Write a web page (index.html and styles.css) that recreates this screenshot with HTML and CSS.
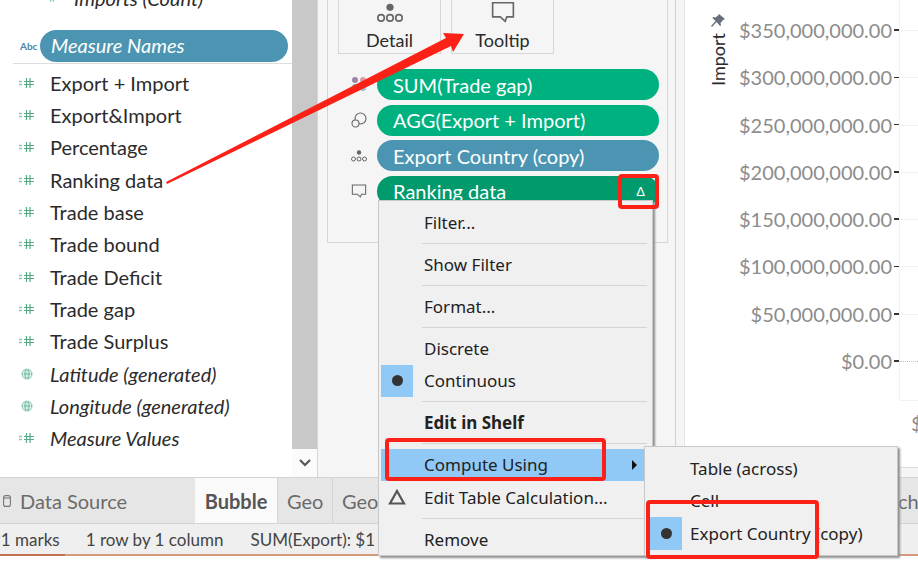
FILE: index.html
```html
<!DOCTYPE html>
<html lang="en">
<head>
    <meta charset="UTF-8">
    <meta name="viewport" content="width=device-width, initial-scale=1.0">
    <title>Ranking data</title>
    <link rel="stylesheet" href="styles.css">
</head>
<body>
    <svg class="defs" width="0" height="0">
        <symbol id="hash" viewBox="0 0 16 12">
            <path d="M0 4.5h3M0 7.5h3" stroke="#8cc7ae" stroke-width="1.6"/>
            <path d="M7.5 1v10M11 1v10M5 4.5h10M5 7.5h10" stroke="#55ab88" stroke-width="1.2" fill="none"/>
        </symbol>
        <symbol id="globe" viewBox="0 0 12 12">
            <circle cx="6" cy="6" r="5.5" fill="#7cc4a8"/>
            <path d="M0.5 4h11M0.5 8h11M6 0.5v11M3.5 1.2c-1.4 3-1.4 6.600 0 9.600M8.500 1.200c1.400 3 1.400 6.600 0 9.600" stroke="#fff" stroke-width="0.7" fill="none"/>
        </symbol>
        <symbol id="detail" viewBox="0 0 16 12">
            <circle cx="8" cy="2.500" r="2.200" fill="#666"/>
            <g fill="none" stroke="#666" stroke-width="1"><circle cx="2.500" cy="9" r="2"/><circle cx="8" cy="9" r="2"/><circle cx="13.500" cy="9" r="2"/></g>
        </symbol>
        <symbol id="bubble" viewBox="0 0 22 20">
            <path d="M1.500 1.500h19v13h-6l-1.500 4-4.500-4h-7z" fill="none" stroke="#666" stroke-width="1.500"/>
        </symbol>
    </svg>

    <div class="app">
        <div class="main">
            <div class="sidebar">
                <div class="fields">
                    <div class="field field-first italic"><svg class="ico"><use href="#hash"/></svg>Imports (Count)</div>
                    <div class="measure-row">
                        <span class="abc">Abc</span>
                        <span class="measure-pill">Measure Names</span>
                    </div>
                    <div class="field"><svg class="ico"><use href="#hash"/></svg>Export + Import</div>
                    <div class="field"><svg class="ico"><use href="#hash"/></svg>Export&amp;Import</div>
                    <div class="field"><svg class="ico"><use href="#hash"/></svg>Percentage</div>
                    <div class="field"><svg class="ico"><use href="#hash"/></svg>Ranking data</div>
                    <div class="field"><svg class="ico"><use href="#hash"/></svg>Trade base</div>
                    <div class="field"><svg class="ico"><use href="#hash"/></svg>Trade bound</div>
                    <div class="field"><svg class="ico"><use href="#hash"/></svg>Trade Deficit</div>
                    <div class="field"><svg class="ico"><use href="#hash"/></svg>Trade gap</div>
                    <div class="field"><svg class="ico"><use href="#hash"/></svg>Trade Surplus</div>
                    <div class="field italic"><svg class="ico"><use href="#globe"/></svg>Latitude (generated)</div>
                    <div class="field italic"><svg class="ico"><use href="#globe"/></svg>Longitude (generated)</div>
                    <div class="field italic"><svg class="ico"><use href="#hash"/></svg>Measure Values</div>
                </div>
                <div class="scrollbar">
                    <div class="thumb"></div>
                    <div class="scroll-down">
                        <svg width="14" height="10" viewBox="0 0 14 10"><path d="M2 2l5 5 5-5" fill="none" stroke="#555" stroke-width="2.200"/></svg>
                    </div>
                </div>
            </div>

            <div class="marks">
                <div class="marks-card">
                    <div class="tiles">
                        <div class="tile">
                            <svg class="tile-ico" width="26" height="20"><use href="#detail"/></svg>
                            <span>Detail</span>
                        </div>
                        <div class="tile">
                            <svg class="tile-ico" width="24" height="22"><use href="#bubble"/></svg>
                            <span>Tooltip</span>
                        </div>
                    </div>
                    <div class="pills">
                        <div class="pill-row">
                            <svg class="pill-ico" width="16" height="16" viewBox="0 0 16 16">
                                <circle cx="4" cy="3" r="3" fill="#9a86a8"/>
                                <circle cx="12" cy="3" r="3" fill="#e39a9f"/>
                                <circle cx="4" cy="10" r="3" fill="#7fb5a5"/>
                                <circle cx="12" cy="11" r="3" fill="#9dbbdc"/>
                            </svg>
                            <span class="pill">SUM(Trade gap)</span>
                        </div>
                        <div class="pill-row">
                            <svg class="pill-ico" width="16" height="16" viewBox="0 0 16 16" fill="none" stroke="#666" stroke-width="1.100">
                                <circle cx="9.500" cy="6.500" r="5.500"/>
                                <circle cx="4.500" cy="11.500" r="3.500" fill="#f5f5f5"/>
                            </svg>
                            <span class="pill">AGG(Export + Import)</span>
                        </div>
                        <div class="pill-row">
                            <svg class="pill-ico" width="16" height="12"><use href="#detail"/></svg>
                            <span class="pill pill-blue">Export Country (copy)</span>
                        </div>
                        <div class="pill-row">
                            <svg class="pill-ico" width="16" height="14"><use href="#bubble"/></svg>
                            <span class="pill pill-dark">Ranking data<span class="delta">&#916;</span></span>
                        </div>
                    </div>
                </div>
            </div>

            <div class="splitter"></div>

            <div class="chart">
                <div class="chart-top">
                    <div class="axis-title">
                        <svg class="pin" width="14" height="14" viewBox="0 0 14 14"><path d="M8 0l6 5-2 1-2.500 3 .5 2.500-1 .5L5.500 8 1 13l-1-1 4.500-5L1.500 4l.5-1 2.500.5L7 1.500z" fill="#666f7a"/></svg>
                        <span class="axis-name">Import</span>
                    </div>
                    <div class="axis-values">
                        <div class="tick-row">$350,000,000.00</div>
                        <div class="tick-row">$300,000,000.00</div>
                        <div class="tick-row">$250,000,000.00</div>
                        <div class="tick-row">$200,000,000.00</div>
                        <div class="tick-row">$150,000,000.00</div>
                        <div class="tick-row">$100,000,000.00</div>
                        <div class="tick-row">$50,000,000.00</div>
                        <div class="tick-row">$0.00</div>
                    </div>
                    <div class="plot">
                        <div class="grid-line"></div>
                        <div class="grid-line"></div>
                        <div class="grid-line"></div>
                        <div class="grid-line"></div>
                        <div class="grid-line"></div>
                        <div class="grid-line"></div>
                        <div class="grid-line"></div>
                        <div class="grid-line zero-line"></div>
                    </div>
                </div>
                <div class="x-label">$</div>
                <div class="chart-foot"></div>
            </div>
        </div>

        <div class="tabs">
            <div class="tab tab-source">
                <svg width="8" height="12" viewBox="0 0 8 12" fill="none" stroke="#777" stroke-width="1.100"><rect x="0.600" y="0.600" width="6.800" height="10.800" rx="2"/><path d="M1 3h6"/></svg>
                <span>Data Source</span>
            </div>
            <div class="tab tab-active">Bubble</div>
            <div class="tab tab-geo">Geo</div>
            <div class="tab tab-geo">Geo</div>
            <div class="tab tab-last">cha</div>
        </div>

        <div class="status">
            <span class="status-marks">91 marks</span>
            <span class="status-rows">1 row by 1 column</span>
            <span>SUM(Export): $1</span>
        </div>
        <div class="progress"><div class="progress-done"></div></div>
    </div>

    <div class="menu">
        <div class="menu-item">Filter...</div>
        <div class="menu-sep"></div>
        <div class="menu-item">Show Filter</div>
        <div class="menu-sep"></div>
        <div class="menu-item">Format...</div>
        <div class="menu-sep"></div>
        <div class="menu-item">Discrete</div>
        <div class="menu-item"><span class="check"><span class="dot"></span></span>Continuous</div>
        <div class="menu-sep"></div>
        <div class="menu-item menu-bold">Edit in Shelf</div>
        <div class="menu-sep"></div>
        <div class="menu-item menu-active">Compute Using<span class="submenu-arrow"></span></div>
        <div class="menu-item">
            <span class="check check-plain">
                <svg width="18" height="16" viewBox="0 0 18 16"><path d="M9 2L16 14.500H2z" fill="none" stroke="#555" stroke-width="2.200"/></svg>
            </span>Edit Table Calculation...
        </div>
        <div class="menu-sep"></div>
        <div class="menu-item">Remove</div>
    </div>

    <div class="submenu">
        <div class="menu-item">Table (across)</div>
        <div class="menu-item">Cell</div>
        <div class="menu-item"><span class="check"><span class="dot"></span></span>Export Country (copy)</div>
    </div>

    <div class="redbox redbox-delta"></div>
    <div class="redbox redbox-compute"></div>
    <div class="redbox redbox-export"></div>

    <svg class="arrow" width="918" height="568" viewBox="0 0 918 568">
        <polygon points="166,182 446,38 443,33 464,34 453,52 451,46 167,184" fill="#fb2116"/>
    </svg>
</body>
</html>
```

FILE: styles.css
```css
* {
    box-sizing: border-box;
}

body {
    margin: 0;
    width: 918px;
    height: 568px;
    overflow: hidden;
    position: relative;
    background-color: #fff;
    font-family: 'Lato', sans-serif;
    font-size: 20px;
    color: #2b2b2b;
}

.defs {
    display: block;
}

.app {
    display: flex;
    flex-direction: column;
    height: 556px;
}

.main {
    display: flex;
    height: 477px;
}

/* data pane */
.sidebar {
    display: flex;
    width: 318px;
    border-right: 1px solid #d6d6d6;
}

.fields {
    width: 292px;
    overflow: hidden;
}

.field {
    display: flex;
    align-items: center;
    height: 32.35px;
    padding-left: 19px;
    white-space: nowrap;
}

.field-first {
    margin-top: -18px;
    padding-left: 45px;
    margin-bottom: 16px;
}

.field-first .ico {
    width: 12px;
    margin-right: 17px;
}

.italic {
    font-style: italic;
}

.ico {
    width: 16px;
    height: 12px;
    margin-right: 15px;
    flex-shrink: 0;
}

.measure-row {
    display: flex;
    align-items: center;
    height: 34px;
    margin-left: 13px;
    padding-left: 7px;
    padding-bottom: 1px;
    border-bottom: 1px solid #ddd;
    margin-bottom: 2px;
}

.abc {
    width: 20px;
    font-size: 10px;
    font-weight: 700;
    color: #4b87a5;
}

.measure-pill {
    width: 248px;
    height: 32px;
    line-height: 31px;
    padding-left: 11px;
    border-radius: 16px;
    background-color: #4b95b2;
    color: #fff;
    font-style: italic;
}

.scrollbar {
    display: flex;
    flex-direction: column;
    width: 25px;
}

.thumb {
    flex: 1;
    background-color: #c8c8c8;
}

.scroll-down {
    display: flex;
    align-items: center;
    justify-content: center;
    height: 28px;
    background-color: #fbfbfb;
}

/* marks card */
.marks {
    width: 357px;
    background-color: #f5f5f5;
    padding-left: 9px;
}

.marks-card {
    height: 243px;
    width: 341px;
    border-left: 1px solid #d6d6d6;
    border-right: 1px solid #d6d6d6;
    border-bottom: 1px solid #d6d6d6;
    padding-left: 10px;
}

.tiles {
    display: flex;
    gap: 10px;
}

.tile {
    display: flex;
    flex-direction: column;
    align-items: center;
    justify-content: flex-end;
    width: 103px;
    height: 54px;
    padding-bottom: 1px;
    border: 1px solid #d6d6d6;
    border-top: none;
}

.tile-ico {
    display: block;
    margin-bottom: 5px;
}

.tile span {
    font-size: 18px;
    line-height: 24px;
}

.pills {
    display: flex;
    flex-direction: column;
    gap: 4.500px;
    margin-top: 15px;
}

.pill-row {
    display: flex;
    align-items: center;
}

.pill-ico {
    width: 16px;
    margin-left: 13px;
    margin-right: 10px;
    flex-shrink: 0;
}

.pill {
    display: flex;
    align-items: center;
    justify-content: space-between;
    width: 282px;
    height: 31px;
    padding: 0 16px;
    border-radius: 16px;
    background-color: #00b180;
    color: #fff;
}

.pill-blue {
    background-color: #4b95b2;
}

.pill-dark {
    background-color: #009a6c;
}

.delta {
    font-family: 'Liberation Sans', sans-serif;
    font-size: 13px;
    margin-right: -2px;
}

.splitter {
    width: 10px;
    background-color: #f5f5f5;
    border-left: 1px solid #d0d0d0;
    border-right: 1px solid #e4e4e4;
}

/* chart */
.chart {
    display: flex;
    flex-direction: column;
    flex: 1;
    min-width: 0;
}

.chart-top {
    display: flex;
    height: 401px;
}

.axis-title {
    display: flex;
    flex-direction: column;
    align-items: center;
    width: 54px;
    padding: 14px 0 0 12px;
}

.axis-name {
    writing-mode: vertical-rl;
    transform: rotate(180deg);
    font-size: 18px;
    margin-top: 5px;
}

.axis-values {
    width: 160px;
    padding-top: 6.350px;
}

.tick-row {
    display: flex;
    align-items: center;
    justify-content: flex-end;
    height: 47.300px;
    color: #8c8c8c;
}

.tick-row::after {
    content: "";
    width: 5px;
    height: 1.500px;
    margin-left: 2px;
    background-color: #333;
}

.plot {
    flex: 1;
    padding-top: 30px;
    border-left: 1px solid #f2f2f2;
    border-bottom: 1px solid #f2f2f2;
}

.grid-line {
    height: 47.300px;
    border-top: 1px solid #f0f0f0;
}

.zero-line {
    border-top: 1px dotted #c4c4c4;
    height: 30px;
}

.x-label {
    padding-left: 226px;
    margin-top: 10px;
    line-height: 24px;
    color: #8c8c8c;
    white-space: nowrap;
    overflow: hidden;
}

.chart-foot {
    height: 10px;
    margin-top: auto;
    background-color: #f5f5f5;
    border-top: 1px solid #ddd;
}

/* tabs and status */
.tabs {
    display: flex;
    height: 47px;
    background-color: #e6e6e6;
    border-top: 1px solid #d4d4d4;
    border-bottom: 1px solid #d4d4d4;
    color: #6b6b6b;
}

.tab {
    display: flex;
    align-items: center;
    flex-shrink: 0;
}

.tab-source {
    width: 195px;
    padding-left: 3px;
    gap: 9px;
}

.tab-active {
    justify-content: center;
    width: 83px;
    background-color: #fafafa;
    font-weight: 700;
    color: #555;
    border-right: 1px solid #d4d4d4;
}

.tab-geo {
    width: 55px;
    padding-left: 9px;
    border-right: 1px solid #d4d4d4;
}

.tab-last {
    margin-left: auto;
    width: 20px;
    overflow: hidden;
}

.status {
    display: flex;
    align-items: center;
    flex: 1;
    background-color: #efefef;
    font-size: 17px;
    color: #444;
    white-space: nowrap;
}

.status-marks {
    margin-left: -9px;
    margin-right: 26px;
}

.status-rows {
    margin-right: 27px;
}

.progress {
    height: 2px;
    background-color: #d59a7c;
}

.progress-done {
    width: 65px;
    height: 2px;
    background-color: #c0714f;
}

/* context menus */
.menu,
.submenu {
    position: absolute;
    background-color: #f0f0f0;
    border: 1px solid #c8c8c8;
    box-shadow: 2px 2px 2px #8f8f8f;
    font-family: 'Noto Sans', sans-serif;
    font-size: 17px;
    color: #222;
}

.menu {
    left: 378px;
    top: 200px;
    width: 275px;
    height: 356px;
    padding: 5px 3px 0 2px;
}

.submenu {
    left: 644px;
    top: 446px;
    width: 254px;
    height: 110px;
    padding: 5px 0 0 5px;
}

.menu-item {
    display: flex;
    align-items: center;
    height: 32.500px;
    padding-left: 43px;
    position: relative;
    white-space: nowrap;
}

.submenu .menu-item {
    padding-left: 40px;
}

.menu-bold {
    font-weight: 700;
}

.menu-active {
    background-color: #90c8f6;
}

.menu-sep {
    height: 1px;
    margin: 4px 2px 4.500px 41px;
    background-color: #d4d4d4;
}

.check {
    position: absolute;
    left: 0;
    top: 0;
    display: flex;
    align-items: center;
    justify-content: center;
    width: 32px;
    height: 32.500px;
    background-color: #90c8f6;
}

.check-plain {
    background-color: transparent;
}

.dot {
    width: 11px;
    height: 11px;
    border-radius: 50%;
    background-color: #333;
}

.submenu-arrow {
    position: absolute;
    right: 12px;
    top: 11px;
    border-left: 5px solid #111;
    border-top: 5px solid transparent;
    border-bottom: 5px solid transparent;
}

/* annotations */
.redbox {
    position: absolute;
    border: 4px solid #fb2116;
    border-radius: 4px;
}

.redbox-delta {
    left: 618px;
    top: 174px;
    width: 41px;
    height: 35px;
}

.redbox-compute {
    left: 385px;
    top: 438px;
    width: 221px;
    height: 43px;
}

.redbox-export {
    left: 646px;
    top: 500px;
    width: 173px;
    height: 59px;
}

.arrow {
    position: absolute;
    left: 0;
    top: 0;
}
```
